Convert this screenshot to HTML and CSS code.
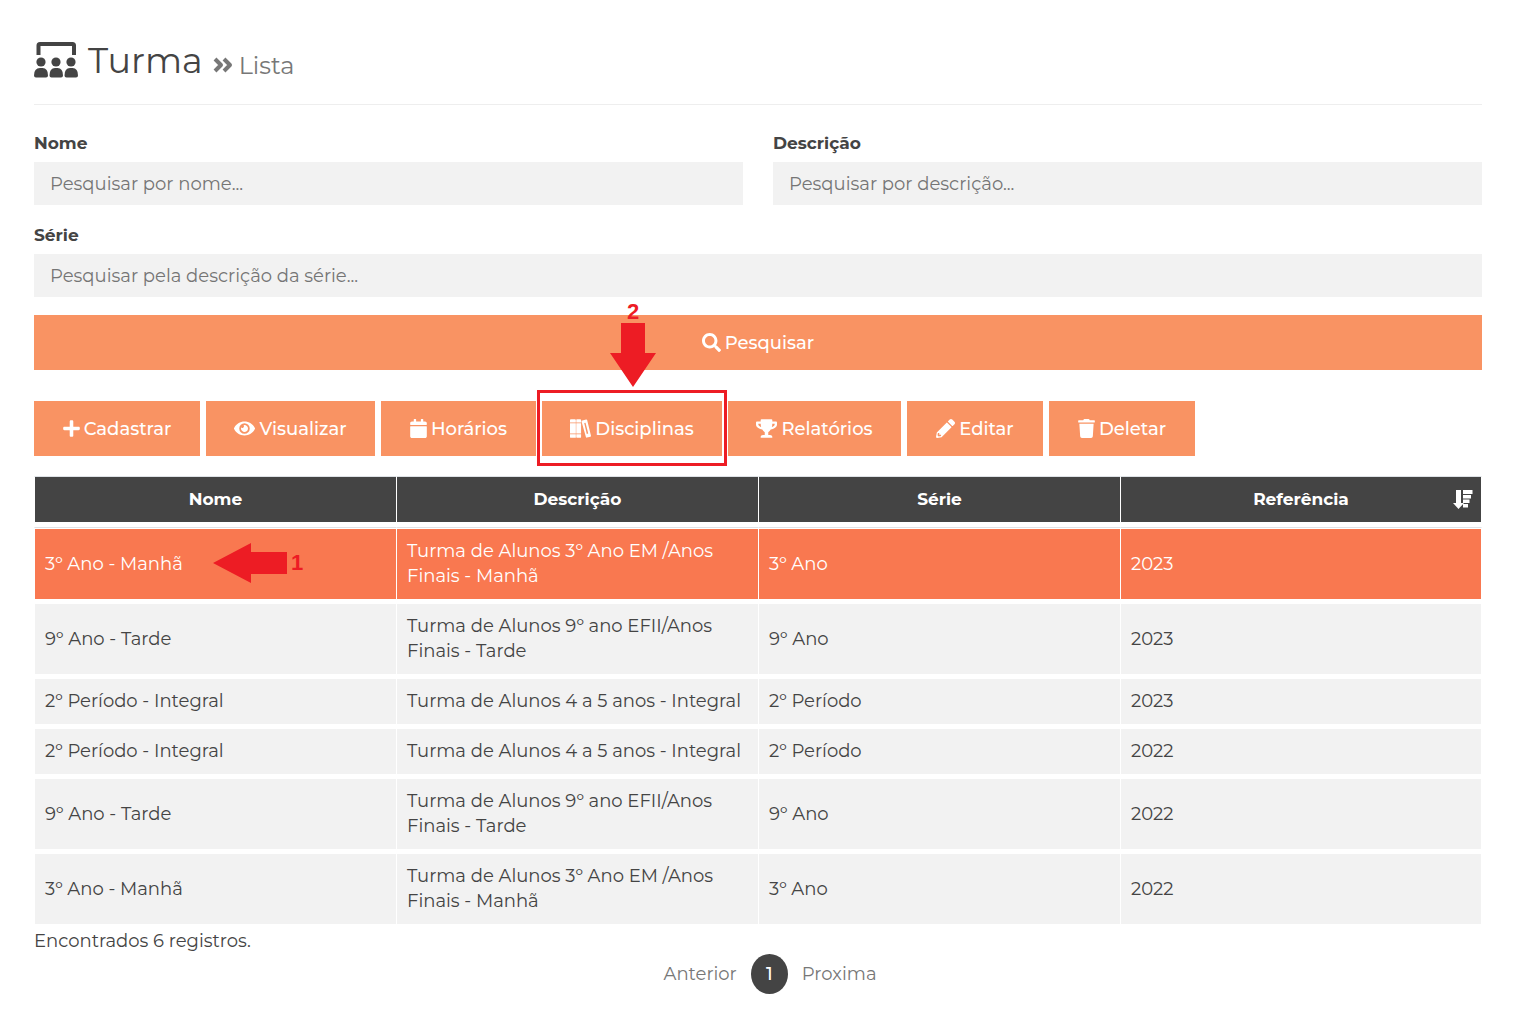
FILE: index.html
```html
<!DOCTYPE html>
<html lang="pt-BR">
<head>
<meta charset="utf-8">
<meta name="viewport" content="width=device-width, initial-scale=1">
<title>Turma - Lista</title>
<link rel="stylesheet" href="styles.css">
</head>
<body>
<main class="page">
  <header class="page-header">
    <svg class="title-icon" viewBox="0 0 44 36" aria-hidden="true"><path d="M4.500 13V3.500Q4.500 2 6 2H38.500Q40 2 40 3.500V13" fill="none" stroke="currentColor" stroke-width="4"/><g fill="currentColor"><circle cx="7" cy="20" r="4.600"/><circle cx="22" cy="20" r="4.600"/><circle cx="37" cy="20" r="4.600"/><path d="M0 33.500Q0 26 6 26H8.500Q14 26 14 33.500Q14 35.500 12 35.500H2Q0 35.500 0 33.500ZM15.500 33.500Q15.500 26 21 26H23.500Q29 26 29 33.500Q29 35.500 27 35.500H17.500Q15.500 35.500 15.500 33.500ZM30.500 33.500Q30.500 26 36 26H38.500Q44 26 44 33.500Q44 35.500 42 35.500H32.500Q30.500 35.500 30.500 33.500Z"/></g></svg>
    <h1 class="title">Turma</h1>
    <span class="subtitle"><svg class="chevrons" viewBox="0 0 20 16" aria-hidden="true"><path d="M2 2L8 8L2 14M11 2L17 8L11 14" fill="none" stroke="currentColor" stroke-width="4" stroke-linejoin="round"/></svg>Lista</span>
  </header>

  <form class="search" onsubmit="return false">
    <div class="field"><label for="nome">Nome</label><input id="nome" type="text" placeholder="Pesquisar por nome..."></div>
    <div class="field"><label for="descricao">Descrição</label><input id="descricao" type="text" placeholder="Pesquisar por descrição..."></div>
    <div class="field field-wide"><label for="serie">Série</label><input id="serie" type="text" placeholder="Pesquisar pela descrição da série..."></div>
    <button class="btn field-wide" type="submit"><svg class="icon" viewBox="0 0 512 512" aria-hidden="true"><path d="M505 442.700L405.300 343c-4.500-4.500-10.600-7-17-7H372c27.600-35.300 44-79.700 44-128C416 93.100 322.900 0 208 0S0 93.100 0 208s93.100 208 208 208c48.300 0 92.700-16.400 128-44v16.300c0 6.400 2.500 12.500 7 17l99.700 99.700c9.400 9.400 24.600 9.400 33.900 0l28.300-28.300c9.400-9.400 9.400-24.600.1-34zM208 336c-70.700 0-128-57.200-128-128 0-70.700 57.200-128 128-128 70.700 0 128 57.200 128 128 0 70.700-57.200 128-128 128z"/></svg>Pesquisar</button>
  </form>

  <div class="toolbar">
    <button class="btn" type="button"><svg class="icon icon-narrow" viewBox="0 0 448 512" aria-hidden="true"><path d="M416 208H272V64c0-17.670-14.330-32-32-32h-32c-17.670 0-32 14.330-32 32v144H32c-17.670 0-32 14.330-32 32v32c0 17.670 14.330 32 32 32h144v144c0 17.670 14.330 32 32 32h32c17.670 0 32-14.330 32-32V304h144c17.670 0 32-14.330 32-32v-32c0-17.670-14.330-32-32-32z"/></svg>Cadastrar</button>
    <button class="btn" type="button"><svg class="icon icon-broad" viewBox="0 0 576 512" aria-hidden="true"><path d="M572.520 241.400C518.290 135.590 410.930 64 288 64S57.680 135.640 3.480 241.410a32.350 32.350 0 0 0 0 29.190C57.710 376.410 165.070 448 288 448s230.320-71.640 284.520-177.410a32.350 32.350 0 0 0 0-29.190zM288 400a144 144 0 1 1 144-144 143.930 143.930 0 0 1-144 144zm0-240a95.310 95.310 0 0 0-25.310 3.790 47.850 47.850 0 0 1-66.900 66.900A95.780 95.780 0 1 0 288 160z"/></svg>Visualizar</button>
    <button class="btn" type="button"><svg class="icon icon-narrow" viewBox="0 0 448 512" aria-hidden="true"><path d="M12 192h424c6.600 0 12 5.400 12 12v260c0 26.500-21.500 48-48 48H48c-26.500 0-48-21.500-48-48V204c0-6.600 5.400-12 12-12zm436-44v-36c0-26.500-21.500-48-48-48h-48V12c0-6.600-5.400-12-12-12h-40c-6.600 0-12 5.400-12 12v52H160V12c0-6.600-5.400-12-12-12h-40c-6.600 0-12 5.400-12 12v52H48C21.500 64 0 85.500 0 112v36c0 6.600 5.400 12 12 12h424c6.600 0 12-5.400 12-12z"/></svg>Horários</button>
    <div class="callout-anchor">
      <button class="btn" type="button"><svg class="icon icon-broad" viewBox="0 0 576 512" aria-hidden="true"><path d="M24 0H136Q160 0 160 24V92H0V24Q0 0 24 0ZM0 112H160V392H0ZM0 412H160V512H24Q0 512 0 488ZM186 0H280Q304 0 304 24V92H172V14ZM172 112H304V392H172ZM172 412H304V488Q304 512 280 512H186L172 498ZM318 68Q314 44 338 36L442 10Q464 4 470 26L574 450Q580 474 558 480L464 506Q442 512 436 490L318 68ZM390 106L460 406L500 396L426 96Z" fill-rule="evenodd"/></svg>Disciplinas</button>
      <span class="callout-box"></span>
      <span class="callout callout-down">2<svg class="arrow-down" viewBox="0 0 46 64" aria-hidden="true"><path d="M11 0H35V30H46L23 64L0 30H11Z"/></svg></span>
    </div>
    <button class="btn" type="button"><svg class="icon icon-broad" viewBox="0 0 576 512" aria-hidden="true"><path d="M552 64H448V24c0-13.300-10.700-24-24-24H152c-13.300 0-24 10.700-24 24v40H24C10.700 64 0 74.700 0 88v56c0 35.700 22.500 72.400 61.900 100.700 31.500 22.700 69.800 37.100 110 41.700C203.300 338.500 240 360 240 360v72h-48c-35.300 0-64 20.700-64 56v12c0 6.600 5.400 12 12 12h296c6.600 0 12-5.400 12-12v-12c0-35.300-28.700-56-64-56h-48v-72s36.700-21.500 68.100-73.600c40.300-4.600 78.600-19 110-41.700 39.300-28.300 61.900-65 61.900-100.700V88c0-13.300-10.700-24-24-24zM99.300 192.800C74.900 175.200 64 155.600 64 144v-16h64.200c1 32.600 5.800 61.200 12.800 86.200-15.100-5.200-29.200-12.400-41.700-21.400zM512 144c0 16.100-17.700 36.100-35.300 48.800-12.500 9-26.700 16.200-41.800 21.400 7-25 11.800-53.600 12.800-86.200H512v16z"/></svg>Relatórios</button>
    <button class="btn" type="button"><svg class="icon" viewBox="0 0 512 512" aria-hidden="true"><path d="M497.900 142.100l-46.100 46.100c-4.700 4.700-12.300 4.700-17 0l-111-111c-4.700-4.700-4.700-12.300 0-17l46.100-46.100c18.700-18.700 49.100-18.700 67.900 0l60.100 60.100c18.800 18.700 18.800 49.100 0 67.900zM284.200 99.800L21.600 362.400.4 483.900c-2.900 16.400 11.400 30.600 27.800 27.800l121.500-21.300 262.600-262.600c4.700-4.700 4.700-12.300 0-17l-111-111c-4.800-4.700-12.400-4.700-17.100 0zM88 424h48v36.300l-64.500 11.300-31.100-31.100L51.700 376H88v48z"/></svg>Editar</button>
    <button class="btn" type="button"><svg class="icon icon-narrow" viewBox="0 0 448 512" aria-hidden="true"><path d="M432 32H312l-9.400-18.700A24 24 0 0 0 281.100 0H166.800a23.720 23.720 0 0 0-21.400 13.300L136 32H16A16 16 0 0 0 0 48v32a16 16 0 0 0 16 16h416a16 16 0 0 0 16-16V48a16 16 0 0 0-16-16zM53.200 467a48 48 0 0 0 47.900 45h245.800a48 48 0 0 0 47.900-45L416 128H32z"/></svg>Deletar</button>
  </div>

  <table class="records">
    <thead>
      <tr><th scope="col">Nome</th><th scope="col">Descrição</th><th scope="col">Série</th><th scope="col">Referência<svg class="sort-icon" viewBox="0 0 20 20" aria-hidden="true"><path d="M3 0H8V13H11L5.500 19L0 13H3ZM10 0H19.500V4H10ZM10 5H18V8.500H10ZM10 9.500H16.500V13H10ZM10 14H15V17.500H10Z"/></svg></th></tr>
    </thead>
    <tbody>
      <tr class="selected"><td><span class="callout-anchor">3º Ano - Manhã<span class="callout callout-left"><svg class="arrow-left" viewBox="0 0 74 40" aria-hidden="true"><path d="M0 20L38 0V9H74V31H38V40Z"/></svg>1</span></span></td><td>Turma de Alunos 3º Ano EM /Anos Finais - Manhã</td><td>3º Ano</td><td>2023</td></tr>
      <tr><td>9º Ano - Tarde</td><td>Turma de Alunos 9º ano EFII/Anos Finais - Tarde</td><td>9º Ano</td><td>2023</td></tr>
      <tr><td>2º Período - Integral</td><td>Turma de Alunos 4 a 5 anos - Integral</td><td>2º Período</td><td>2023</td></tr>
      <tr><td>2º Período - Integral</td><td>Turma de Alunos 4 a 5 anos - Integral</td><td>2º Período</td><td>2022</td></tr>
      <tr><td>9º Ano - Tarde</td><td>Turma de Alunos 9º ano EFII/Anos Finais - Tarde</td><td>9º Ano</td><td>2022</td></tr>
      <tr><td>3º Ano - Manhã</td><td>Turma de Alunos 3º Ano EM /Anos Finais - Manhã</td><td>3º Ano</td><td>2022</td></tr>
    </tbody>
  </table>

  <p class="summary">Encontrados 6 registros.</p>
  <nav class="pagination" aria-label="Paginação">
    <a href="#">Anterior</a>
    <a href="#" class="current" aria-current="page">1</a>
    <a href="#">Proxima</a>
  </nav>
</main>
</body>
</html>
```
FILE: styles.css
```css
* {
  box-sizing: border-box;
}

body {
  margin: 0;
  background: #fff;
  color: #444;
  font-family: Montserrat, Inter, sans-serif;
  font-size: 18px;
  line-height: 25px;
}

.page {
  padding: 36px 36px 20px 34px;
}

/* Title */
.page-header {
  display: flex;
  align-items: baseline;
  height: 69px;
  border-bottom: 1px solid #eee;
}

.title-icon {
  width: 44px;
  height: 36px;
  margin-right: 10px;
  align-self: flex-start;
  margin-top: 6px;
}

.title {
  margin: 0 10px 0 0;
  font-size: 35px;
  line-height: 50px;
  font-weight: 400;
}

.subtitle {
  display: flex;
  align-items: center;
  gap: 6px;
  color: #777;
  font-size: 24px;
}

.chevrons {
  width: 20px;
  height: 16px;
}

/* Search form */
.search {
  display: grid;
  grid-template-columns: 1fr 1fr;
  column-gap: 30px;
  row-gap: 18px;
  margin-top: 26px;
}

.field {
  display: flex;
  flex-direction: column;
  gap: 6px;
}

.field-wide {
  grid-column: 1 / -1;
}

.field label {
  font-size: 17px;
  font-weight: 700;
}

.field input {
  width: 100%;
  height: 43px;
  padding: 0 16px;
  border: 0;
  background: #f2f2f2;
  color: #444;
  font: inherit;
}

.field input::placeholder {
  color: #757575;
  opacity: 1;
}

/* Buttons */
.btn {
  display: flex;
  align-items: center;
  justify-content: center;
  gap: 4px;
  width: 100%;
  height: 55px;
  padding: 2px 0 0;
  border: 0;
  background: #f99363;
  color: #fff;
  font: inherit;
  font-weight: 500;
  cursor: pointer;
}

.icon {
  flex: none;
  width: 19px;
  height: 19px;
  margin-bottom: 2px;
  fill: currentColor;
}

.icon-narrow {
  width: 17px;
}

.icon-broad {
  width: 21px;
}

.toolbar {
  display: grid;
  grid-template-columns: 166px 169px 155px 180px 173px 136px 146px;
  gap: 6px;
  margin: 31px 0 20px;
}

/* Tutorial marks */
.callout-anchor {
  position: relative;
}

.callout-box {
  position: absolute;
  inset: -11px -5px -10px;
  border: 3px solid #ed1c24;
  pointer-events: none;
}

.callout {
  position: absolute;
  display: flex;
  align-items: center;
  color: #ed1c24;
  font: 700 22px/22px "Liberation Sans", Arial, sans-serif;
  pointer-events: none;
}

.callout svg {
  fill: currentColor;
}

.callout-down {
  left: 2px;
  right: 0;
  bottom: 69px;
  flex-direction: column;
}

.callout-left {
  left: 168px;
  top: 0;
  bottom: 2px;
  gap: 4px;
}

.arrow-down {
  width: 46px;
  height: 64px;
}

.arrow-left {
  width: 74px;
  height: 40px;
}

/* Records */
.records {
  width: 100%;
  table-layout: fixed;
  border-collapse: separate;
  border-spacing: 0;
}

.records th,
.records td {
  border-left: 1px solid #fff;
}

.records th:last-child,
.records td:last-child {
  border-right: 1px solid #fff;
}

.records th {
  position: relative;
  padding: 10px 10px 15px;
  border-top: 1px solid #dee2e6;
  border-bottom: 1px solid #dee2e6;
  background: linear-gradient(#444, #444) 0 0 / 100% 45px no-repeat;
  background-origin: padding-box;
  color: #fff;
  font-size: 17px;
  font-weight: 700;
}

.records td {
  padding: 10px;
  border-bottom: 5px solid #fff;
  background: #f2f2f2;
  vertical-align: middle;
}

.records .selected td {
  border-top: 1px solid #fff;
  background: #f97850;
  color: #fff;
}

.selected .callout-anchor {
  display: block;
}

.sort-icon {
  position: absolute;
  top: 13px;
  right: 8px;
  width: 20px;
  height: 20px;
  fill: #fff;
}

/* Footer */
.summary {
  margin: 0;
}

.pagination {
  display: flex;
  align-items: center;
  justify-content: center;
  gap: 14px;
  padding-left: 24px;
}

.pagination a {
  color: #777;
  text-decoration: none;
}

.pagination .current {
  width: 37px;
  border-radius: 50%;
  background: #444;
  color: #fff;
  font-weight: 500;
  line-height: 40px;
  text-align: center;
}
```
